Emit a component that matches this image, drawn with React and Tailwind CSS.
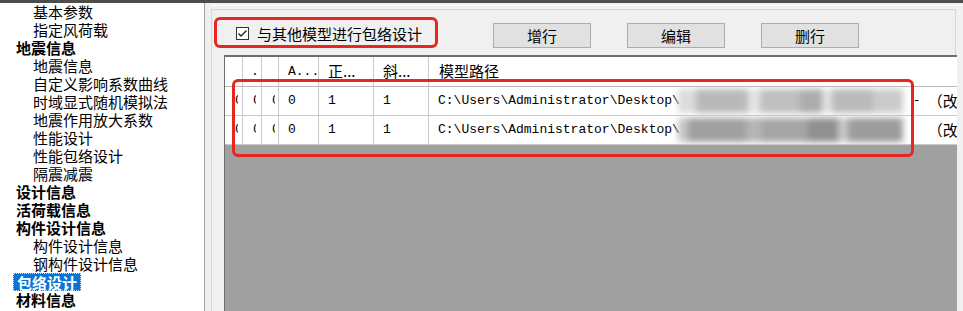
import React from 'react';

const cjk = { fontFamily: '"Noto Sans CJK SC", "Noto Sans", sans-serif' };

const tree = [
  { t: '基本参数', child: true },
  { t: '指定风荷载', child: true },
  { t: '地震信息' },
  { t: '地震信息', child: true },
  { t: '自定义影响系数曲线', child: true },
  { t: '时域显式随机模拟法', child: true },
  { t: '地震作用放大系数', child: true },
  { t: '性能设计', child: true },
  { t: '性能包络设计', child: true },
  { t: '隔震减震', child: true },
  { t: '设计信息' },
  { t: '活荷载信息' },
  { t: '构件设计信息' },
  { t: '构件设计信息', child: true },
  { t: '钢构件设计信息', child: true },
  { t: '包络设计', selected: true },
  { t: '材料信息' },
  { t: '钢材信息', child: true },
];

// pixelated blur that hides the file name in the screenshot
const blurRows = [
  [
    [18, '#dcdcdc'], [52, '#b9b9b9'], [12, '#e4e4e4'], [40, '#bfbfbf'], [22, '#acacac'],
    [10, '#e2e2e2'], [41, '#bababa'], [30, '#cbcbcb'],
  ],
  [
    [10, '#c6c6c6'], [58, '#a0a0a0'], [16, '#b5b5b5'], [46, '#a5a5a5'], [30, '#909090'],
    [10, '#c8c8c8'], [55, '#9c9c9c'],
  ],
];

const widths = ['w-[18px]', 'w-[19px]', 'w-[17px]', 'w-[40px]', 'w-[55px]', 'w-[55px]'];

const Clipped = () => (
  <span className="inline-block w-[3px] overflow-hidden">0</span>
);

const TreeItem = ({ item }) => (
  <div
    className={`h-[18px] flex items-center text-[15px] leading-[18px] text-black whitespace-nowrap ${
      item.child ? 'pl-[30px]' : 'pl-[13px] font-bold'
    }`}
    style={cjk}
  >
    <span
      className={`px-[3px] h-[18px] leading-[18px] ${
        item.selected ? 'bg-[#0a74d6] text-white border border-dotted border-[#b9d8f5]' : ''
      }`}
    >
      {item.t}
    </span>
  </div>
);

const Row = ({ blur, dash }) => (
  <div className="flex h-[29px] bg-white border-b border-[#c9c9c9] font-['Liberation_Mono',monospace] text-[13px] text-black">
    {[0, 1, 2].map(i => (
      <div key={i} className={`${widths[i]} shrink-0 border-r border-[#c9c9c9] pl-[10px] flex items-center`}>
        <Clipped />
      </div>
    ))}
    {['0', '1', '1'].map((v, i) => (
      <div key={i} className={`${widths[i + 3]} shrink-0 border-r border-[#c9c9c9] pl-[9px] flex items-center`}>
        {v}
      </div>
    ))}
    <div className="flex-1 pl-[9px] flex items-center whitespace-nowrap overflow-hidden">
      <span>C:\Users\Administrator\Desktop\</span>
      <span className="flex h-[24px] w-[225px] shrink-0 blur-[3px] -ml-[2px]">
        {blur.map(([w, c], i) => (
          <span key={i} className="h-full" style={{ width: w, background: c }} />
        ))}
      </span>
      <span className="w-[25px] shrink-0 pl-[10px]">{dash ? '-' : ''}</span>
      <span className="text-[15px]" style={cjk}>（改</span>
    </div>
  </div>
);

export default function App() {
  return (
    <div className="relative w-[963px] h-[311px] overflow-hidden bg-[#f0f0f0] flex flex-col">
      <div className="h-[3px] bg-[#4d4d4d] shrink-0" />
      <div className="flex flex-1 min-h-0">
        {/* left tree */}
        <div className="w-[205px] shrink-0 bg-white border-r border-[#a0a0a0] overflow-hidden">
          {tree.map((item, i) => (
            <TreeItem key={i} item={item} />
          ))}
        </div>

        {/* right panel */}
        <div className="flex-1 pt-[2px] pl-[6px]">
          <div className="border-t border-white" />
          <div className="mt-[3px] w-[745px] h-[320px] border-l border-t border-r border-[#d6d6d6]">
            <div className="flex h-[45px]">
              <label className="w-[281px] pl-[24px] pt-[14px] flex items-start gap-[8px]" style={cjk}>
                <span className="mt-[3px] w-[13px] h-[13px] border border-[#333] bg-white flex items-center justify-center">
                  <svg width="11" height="11" viewBox="0 0 11 11">
                    <polyline points="1.5,5.5 4,8 9.5,2.5" fill="none" stroke="#222" strokeWidth="1.4" />
                  </svg>
                </span>
                <span className="text-[15px] leading-[20px] text-black">与其他模型进行包络设计</span>
              </label>
              <div className="flex gap-[36px] pt-[13px]">
                {['增行', '编辑', '删行'].map(b => (
                  <button
                    key={b}
                    className="w-[98px] h-[25px] bg-[#e1e1e1] border border-[#adadad] text-[15px] leading-[20px] text-black"
                    style={cjk}
                  >
                    {b}
                  </button>
                ))}
              </div>
            </div>

            {/* table */}
            <div className="ml-[12px] w-[733px] h-[270px] border-t-2 border-l border-[#6e6e6e] bg-[#a0a0a0] overflow-hidden">
              <div className="flex h-[30px] bg-white border-b border-[#b9b9b9] text-[15px] text-black">
                <div className={`${widths[0]} shrink-0 border-r border-[#c9c9c9]`} />
                <div className={`${widths[1]} shrink-0 border-r border-[#c9c9c9] pl-[8px] flex items-center font-['Liberation_Mono',monospace] text-[13px]`}>.</div>
                <div className={`${widths[2]} shrink-0 border-r border-[#c9c9c9]`} />
                <div className={`${widths[3]} shrink-0 border-r border-[#c9c9c9] pl-[9px] flex items-center whitespace-nowrap overflow-hidden font-['Liberation_Mono',monospace] text-[13px]`}>A...</div>
                <div className={`${widths[4]} shrink-0 border-r border-[#c9c9c9] pl-[9px] flex items-center`} style={cjk}>正...</div>
                <div className={`${widths[5]} shrink-0 border-r border-[#c9c9c9] pl-[9px] flex items-center`} style={cjk}>斜...</div>
                <div className="flex-1 pl-[10px] flex items-center" style={cjk}>模型路径</div>
              </div>
              <Row blur={blurRows[0]} dash />
              <Row blur={blurRows[1]} />
            </div>
          </div>
        </div>
      </div>

      {/* red annotation boxes */}
      <div className="absolute left-[214px] top-[17px] w-[224px] h-[31px] border-[3px] border-[#e5281f] rounded-[6px]" />
      <div className="absolute left-[232px] top-[79px] w-[682px] h-[78px] border-[3px] border-[#e5281f] rounded-[6px]" />
    </div>
  );
}
